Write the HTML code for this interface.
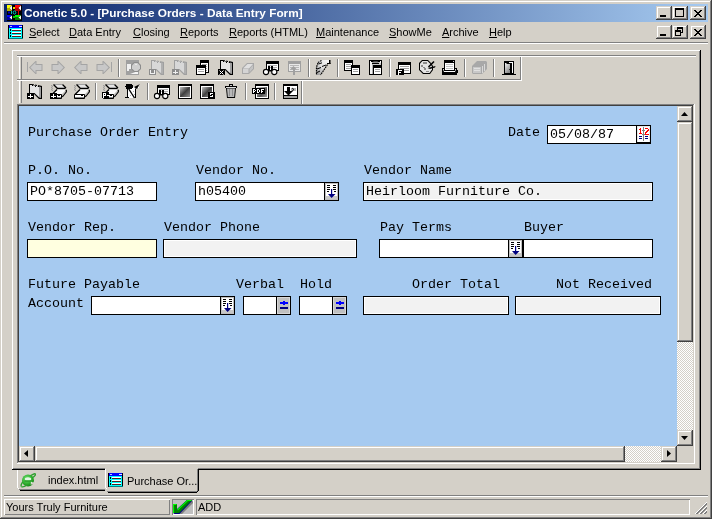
<!DOCTYPE html>
<html><head><meta charset="utf-8">
<style>
*{margin:0;padding:0;box-sizing:border-box}
html,body{width:712px;height:519px;overflow:hidden;background:#d4d0c8;font-family:"Liberation Sans",sans-serif;font-size:11px;color:#000}
.a{position:absolute}
.rz{box-shadow:inset -1px -1px #404040,inset 1px 1px #d4d0c8,inset -2px -2px #808080,inset 2px 2px #fff;background:#d4d0c8}
.hl{background:#fff}
.sh{background:#808080}
.dk{background:#404040}
.mono{font-family:"Liberation Mono",monospace;font-size:13.33px;white-space:pre;line-height:15px}
.fld{border:1px solid #000;background:#fff}
.dis{border:1px solid #000;background:#f2f2f2;box-shadow:inset 1px 1px #fff,inset -1px -1px #fff}
.menu span{position:absolute;top:26px;white-space:nowrap;line-height:13px}
u{text-decoration:underline;text-underline-offset:1px;text-decoration-thickness:1px}
.tb svg{position:absolute}
.sep{position:absolute;width:2px;box-shadow:inset 1px 0 #808080,inset -1px 0 #fff}
.chk{background-color:#fff;background-image:linear-gradient(45deg,#d4d0c8 25%,transparent 25%,transparent 75%,#d4d0c8 75%),linear-gradient(45deg,#d4d0c8 25%,transparent 25%,transparent 75%,#d4d0c8 75%);background-size:2px 2px;background-position:0 0,1px 1px}
</style></head><body><div style="position:absolute;left:0;top:0;width:712px;height:519px;will-change:transform">
<!-- window frame -->
<div class="a rz" style="left:0;top:0;width:712px;height:519px"></div>

<!-- title bar -->
<div class="a" style="left:4px;top:4px;width:704px;height:18px;background:linear-gradient(to right,#0a246a,#a6caf0)"></div>
<svg class="a" style="left:6px;top:5px" width="16" height="16" viewBox="0 0 16 16">
<rect x="1" y="0" width="15" height="16" fill="#000"/>
<polygon points="1,0 6,0 3.5,3 1,3" fill="#ffff00"/><polygon points="1,3 3.5,3 6,6 1,6" fill="#b0b000"/><polygon points="6,0.5 6,5.5 3.5,3" fill="#fff"/>
<polygon points="9,0 15,0 12.5,3 9,3" fill="#ff0000"/><polygon points="9,3 12.5,3 15,6 9,6" fill="#b00000"/><polygon points="15,0.5 15,5.5 12.5,3" fill="#fff"/>
<polygon points="1,10 6,10 3.5,12.5 1,12.5" fill="#0000ff"/><polygon points="1,12.5 3.5,12.5 6,15 1,15" fill="#0000a0"/><polygon points="6,10.5 6,14.5 3.5,12.5" fill="#fff"/>
<polygon points="9,10 15,10 12.5,12.5 9,12.5" fill="#00ff00"/><polygon points="9,12.5 12.5,12.5 15,15 9,15" fill="#008000"/><polygon points="15,10.5 15,14.5 12.5,12.5" fill="#fff"/>
<rect x="7" y="2" width="2" height="2" fill="#e0e000"/><rect x="7" y="11" width="2" height="2" fill="#00d000"/>
<rect x="2" y="6.5" width="2" height="2" fill="#0000c0"/><rect x="12" y="6" width="1" height="4" fill="#e00000"/>
<rect x="5" y="6" width="1" height="3" fill="#00c0c0"/><ellipse cx="8.5" cy="7.5" rx="1.3" ry="1.6" fill="none" stroke="#00c0c0" stroke-width="1"/>
</svg>
<div class="a" style="left:24px;top:6px;color:#fff;font-weight:bold;font-size:11.8px;line-height:15px;white-space:nowrap">Conetic 5.0 - [Purchase Orders - Data Entry Form]</div>
<!-- caption buttons -->
<div class="a rz" style="left:656px;top:6px;width:16px;height:14px"><div class="a" style="left:4px;top:9px;width:6px;height:2px;background:#000"></div></div>
<div class="a rz" style="left:672px;top:6px;width:16px;height:14px"><div class="a" style="left:3px;top:2px;width:9px;height:9px;border:1px solid #000;border-top-width:2px"></div></div>
<div class="a rz" style="left:690px;top:6px;width:16px;height:14px"><svg class="a" style="left:4px;top:4px" width="8" height="7" shape-rendering="crispEdges"><path d="M0 0h2v1h-2zM6 0h2v1h-2zM1 1h2v1h-2zM5 1h2v1h-2zM2 2h4v1h-4zM3 3h2v1h-2zM2 4h4v1h-4zM1 5h2v1h-2zM5 5h2v1h-2zM0 6h2v1h-2zM6 6h2v1h-2z" fill="#000"/></svg></div>

<!-- menu bar -->
<svg class="a" style="left:8px;top:25px" width="15" height="14" viewBox="0 0 15 14">
<rect x="0" y="0" width="15" height="14" fill="#000"/>
<rect x="1" y="0" width="13" height="3" fill="#0000ff"/>
<rect x="2" y="1" width="2" height="1" fill="#c0c0ff"/><rect x="11" y="1" width="3" height="1" fill="#e0e0ff"/>
<rect x="1" y="3" width="13" height="10" fill="#00ffff"/>
<rect x="1" y="13" width="14" height="1" fill="#008080"/>
<rect x="2" y="4" width="1" height="2" fill="#000"/><rect x="4" y="4" width="9" height="1" fill="#fff"/><rect x="4" y="5" width="9" height="1" fill="#502020"/>
<rect x="2" y="7" width="1" height="2" fill="#000"/><rect x="4" y="7" width="9" height="1" fill="#fff"/><rect x="4" y="8" width="9" height="1" fill="#502020"/>
<rect x="2" y="10" width="1" height="2" fill="#000"/><rect x="4" y="10" width="9" height="1" fill="#fff"/><rect x="4" y="11" width="9" height="1" fill="#502020"/>
</svg>
<div class="menu">
<span style="left:29px"><u>S</u>elect</span>
<span style="left:69px"><u>D</u>ata Entry</span>
<span style="left:133px"><u>C</u>losing</span>
<span style="left:180px"><u>R</u>eports</span>
<span style="left:229px"><u>R</u>eports (HTML)</span>
<span style="left:316px"><u>M</u>aintenance</span>
<span style="left:389px"><u>S</u>howMe</span>
<span style="left:442px"><u>A</u>rchive</span>
<span style="left:489px"><u>H</u>elp</span>
</div>
<div class="a rz" style="left:656px;top:25px;width:16px;height:14px"><div class="a" style="left:4px;top:9px;width:6px;height:2px;background:#000"></div></div>
<div class="a rz" style="left:672px;top:25px;width:16px;height:14px">
<div class="a" style="left:5px;top:2px;width:6px;height:6px;border:1px solid #000;border-top-width:2px"></div>
<div class="a" style="left:3px;top:5px;width:6px;height:6px;border:1px solid #000;border-top-width:2px;background:#d4d0c8"></div></div>
<div class="a rz" style="left:690px;top:25px;width:16px;height:14px"><svg class="a" style="left:4px;top:4px" width="8" height="7" shape-rendering="crispEdges"><path d="M0 0h2v1h-2zM6 0h2v1h-2zM1 1h2v1h-2zM5 1h2v1h-2zM2 2h4v1h-4zM3 3h2v1h-2zM2 4h4v1h-4zM1 5h2v1h-2zM5 5h2v1h-2zM0 6h2v1h-2zM6 6h2v1h-2z" fill="#000"/></svg></div>
<div class="a sh" style="left:4px;top:42px;width:704px;height:1px"></div>
<div class="a hl" style="left:4px;top:43px;width:704px;height:1px"></div>

<!-- tab display area -->
<div class="a hl" style="left:12px;top:50px;width:689px;height:1px"></div>
<div class="a hl" style="left:12px;top:50px;width:1px;height:420px"></div>
<div class="a" style="left:700px;top:50px;width:1px;height:420px;background:#000"></div>
<div class="a sh" style="left:699px;top:51px;width:1px;height:418px"></div>
<div class="a" style="left:12px;top:469px;width:689px;height:1px;background:#000"></div>
<div class="a sh" style="left:13px;top:468px;width:687px;height:1px"></div>

<!-- toolbar bands -->
<div class="a sh" style="left:17px;top:55px;width:679px;height:1px"></div>
<div class="a hl" style="left:17px;top:56px;width:679px;height:1px"></div>
<div class="a sh" style="left:17px;top:79px;width:504px;height:1px"></div>
<div class="a hl" style="left:17px;top:80px;width:505px;height:1px"></div>
<div class="a hl" style="left:19px;top:57px;width:1px;height:22px"></div>
<div class="a sh" style="left:21px;top:57px;width:1px;height:22px"></div>
<div class="a hl" style="left:19px;top:81px;width:1px;height:22px"></div>
<div class="a sh" style="left:21px;top:81px;width:1px;height:22px"></div>
<div class="a sh" style="left:520px;top:57px;width:1px;height:22px"></div>
<div class="a hl" style="left:521px;top:57px;width:1px;height:23px"></div>
<div class="a sh" style="left:301px;top:81px;width:1px;height:23px"></div>
<div class="a hl" style="left:302px;top:81px;width:1px;height:23px"></div>
<!--TB-->
<svg class="a" style="left:0;top:0" width="712" height="110" viewBox="0 0 712 110">
<rect x="27" y="62" width="1" height="10" fill="#a4a4a4"/>
<polygon points="29,67.5 35.5,61 36.5,61 36.5,64 42.5,64 42.5,71 36.5,71 36.5,74 35.5,74" fill="#a4a4a4"/>
<polygon points="30.4,67.5 35.7,62.2 35.5,62 35.5,65 41.5,65 41.5,70 35.5,70 35.5,72.8" fill="#c8c8c8"/>
<polygon points="65,67.5 58.5,61 57.5,61 57.5,64 51.5,64 51.5,71 57.5,71 57.5,74 58.5,74" fill="#a4a4a4"/>
<polygon points="63.6,67.5 58.3,62.2 58.5,62 58.5,65 52.5,65 52.5,70 58.5,70 58.5,72.8" fill="#c8c8c8"/>
<polygon points="74,67.5 80.5,61 81.5,61 81.5,64 87.5,64 87.5,71 81.5,71 81.5,74 80.5,74" fill="#a4a4a4"/>
<polygon points="75.4,67.5 80.7,62.2 80.5,62 80.5,65 86.5,65 86.5,70 80.5,70 80.5,72.8" fill="#c8c8c8"/>
<polygon points="110,67.5 103.5,61 102.5,61 102.5,64 96.5,64 96.5,71 102.5,71 102.5,74 103.5,74" fill="#a4a4a4"/>
<polygon points="108.6,67.5 103.3,62.2 103.5,62 103.5,65 97.5,65 97.5,70 103.5,70 103.5,72.8" fill="#c8c8c8"/>
<rect x="111" y="62" width="1" height="10" fill="#a4a4a4"/>
<rect x="126" y="60" width="13" height="15" fill="#a0a0a0"/>
<rect x="127" y="64" width="4" height="5" fill="#f0f0f0"/><rect x="127" y="69" width="2" height="2" fill="#f0f0f0"/>
<polygon points="130,74 138,71 138,74" fill="#f4f4f4"/>
<polygon points="134,62 138,62 141,65 141,69 138,72 134,72 131,69 131,65" fill="#8c8c8c"/>
<polygon points="134.5,63 137.5,63 140,65.5 140,68.5 137.5,71 134.5,71 132,68.5 132,65.5" fill="#cfcfcf"/>
<rect x="135" y="64" width="2" height="1" fill="#e8e8e8"/>
<polygon points="151,60 154,60 162,61.5 164,62 164,75 161,75 156,70 151,70" fill="#a0a0a0"/>
<polygon points="152,61 154,61 161,62.5 161,73.2 156.5,69 152,69" fill="#d8d8d8"/>
<polygon points="161,62.5 163,63 163,74 161,73.5" fill="#b0b0b0"/>
<path d="M154 61h1v1h-1zM157 62h1v1h-1zM160 62h1v1h-1z" fill="#a0a0a0"/>
<path d="M156 60h1v1h-1zM159 61h1v1h-1z" fill="#d4d0c8"/>
<rect x="149" y="69" width="7" height="6" fill="#8c8c8c"/>
<path d="M150 70h1v3h3v-3h1v4h-5z" fill="#f0f0f0"/>
<polygon points="174,60 177,60 185,61.5 187,62 187,75 184,75 179,70 174,70" fill="#a0a0a0"/>
<polygon points="175,61 177,61 184,62.5 184,73.2 179.5,69 175,69" fill="#d8d8d8"/>
<polygon points="184,62.5 186,63 186,74 184,73.5" fill="#b0b0b0"/>
<path d="M177 61h1v1h-1zM180 62h1v1h-1zM183 62h1v1h-1z" fill="#a0a0a0"/>
<path d="M179 60h1v1h-1zM182 61h1v1h-1z" fill="#d4d0c8"/>
<rect x="172" y="69" width="7" height="6" fill="#8c8c8c"/>
<rect x="175" y="70" width="1" height="4" fill="#f0f0f0"/><rect x="173" y="72" width="5" height="1" fill="#f0f0f0"/>
<rect x="200" y="60" width="9" height="13" fill="#000"/>
<rect x="200" y="60" width="9" height="3" fill="#000"/>
<rect x="201" y="63" width="7" height="9" fill="#fff"/>
<rect x="202" y="64" width="5" height="1" fill="#a0a0a0"/>
<rect x="202" y="66" width="5" height="1" fill="#a0a0a0"/>
<rect x="202" y="68" width="5" height="1" fill="#a0a0a0"/>
<rect x="202" y="70" width="5" height="1" fill="#a0a0a0"/>
<rect x="196" y="65" width="10" height="10" fill="#000"/>
<rect x="196" y="65" width="10" height="3" fill="#000"/>
<rect x="197" y="68" width="8" height="6" fill="#fff"/>
<rect x="198" y="69" width="6" height="1" fill="#a0a0a0"/>
<rect x="198" y="71" width="6" height="1" fill="#a0a0a0"/>
<polygon points="220,60 223,60 231,61.5 233,62 233,75 230,75 225,70 220,70" fill="#000"/>
<polygon points="221,61 223,61 230,62.5 230,73.2 225.5,69 221,69" fill="#e4e4e4"/>
<polygon points="230,62.5 232,63 232,74 230,73.5" fill="#a0a0a0"/>
<path d="M223 61h1v1h-1zM226 62h1v1h-1zM229 62h1v1h-1z" fill="#000"/>
<path d="M225 60h1v1h-1zM228 61h1v1h-1z" fill="#d4d0c8"/>
<rect x="218" y="69" width="7" height="6" fill="#000"/>
<path d="M219.5 70.5l4 4M223.5 70.5l-4 4" stroke="#fff" stroke-width="1"/>
<polygon points="242,68 247,63 254,63 254,69 249,74 242,74" fill="#a8a8a8"/>
<polygon points="243,68.5 247.5,64 253,64 249,68.5" fill="#e0e0e0"/>
<rect x="243" y="69" width="5.5" height="4" fill="#d4d4d4"/>
<polygon points="249.5,69 253,65 253,68.6 249.5,72.5" fill="#c4c4c4"/>
<rect x="266" y="61" width="13" height="10" fill="#000"/>
<rect x="266" y="61" width="13" height="3" fill="#000"/>
<rect x="267" y="64" width="11" height="6" fill="#fff"/>
<rect x="268" y="65" width="9" height="1" fill="#b0b0b0"/>
<rect x="268" y="67" width="9" height="1" fill="#b0b0b0"/>
<rect x="268" y="66" width="2" height="4" fill="#000"/><rect x="271" y="66" width="2" height="4" fill="#000"/>
<circle cx="266" cy="72" r="2.6" fill="#fff" stroke="#000" stroke-width="1.1"/><circle cx="274.3" cy="72" r="2.6" fill="#fff" stroke="#000" stroke-width="1.1"/>
<rect x="268.7" y="70" width="3" height="1.5" fill="#000"/>
<rect x="288" y="61" width="13" height="11" fill="#a0a0a0"/>
<rect x="288" y="61" width="13" height="3" fill="#a0a0a0"/>
<rect x="289" y="64" width="11" height="7" fill="#e8e8e8"/>
<rect x="290" y="65" width="9" height="1" fill="#b8b8b8"/>
<rect x="290" y="67" width="9" height="1" fill="#b8b8b8"/>
<rect x="290" y="69" width="9" height="1" fill="#b8b8b8"/>
<polygon points="293.5,66 297,69.5 295,69.5 295,75 293,75 293,69.5 290,69.5" fill="#a0a0a0"/>
<rect x="118" y="59" width="1" height="18" fill="#808080"/><rect x="119" y="59" width="1" height="18" fill="#fff"/>
<rect x="308" y="59" width="1" height="18" fill="#808080"/><rect x="309" y="59" width="1" height="18" fill="#fff"/>
<rect x="337" y="59" width="1" height="18" fill="#808080"/><rect x="338" y="59" width="1" height="18" fill="#fff"/>
<rect x="389" y="59" width="1" height="18" fill="#808080"/><rect x="390" y="59" width="1" height="18" fill="#fff"/>
<rect x="464" y="59" width="1" height="18" fill="#808080"/><rect x="465" y="59" width="1" height="18" fill="#fff"/>
<rect x="493" y="59" width="1" height="18" fill="#808080"/><rect x="494" y="59" width="1" height="18" fill="#fff"/>
<defs><linearGradient id="lg13" x1="1" y1="0" x2="0" y2="1"><stop offset="0" stop-color="#fafafa"/><stop offset="0.5" stop-color="#e0e0e0"/><stop offset="1" stop-color="#909090"/></linearGradient></defs>
<polygon points="318,61 322,60 329.5,60 329.5,63.5 326.5,64 321,75 316,75 316,68 318,65" fill="url(#lg13)"/>
<path d="M321.5 60.5L318 62.5M318 63L316.5 67V75M327.5 64.5L320.5 75" stroke="#000" stroke-width="1.2" stroke-dasharray="1.6 0.8" fill="none"/>
<rect x="329" y="60" width="1.5" height="4" fill="#000"/><rect x="327" y="63" width="3.5" height="1" fill="#000"/>
<path d="M318.5 64L322 62.8M317 69L321 67.5M317 72.5L320 71M322 66.5L326 65" stroke="#000" stroke-width="1" fill="none"/>
<rect x="344" y="60" width="9" height="11" fill="#000"/>
<rect x="344" y="60" width="9" height="3" fill="#000"/>
<rect x="345" y="63" width="7" height="7" fill="#fff"/>
<rect x="346" y="64" width="5" height="1" fill="#a0a0a0"/>
<rect x="346" y="66" width="5" height="1" fill="#a0a0a0"/>
<rect x="346" y="68" width="5" height="1" fill="#a0a0a0"/>
<rect x="351" y="65" width="9" height="10" fill="#000"/>
<rect x="351" y="65" width="9" height="3" fill="#000"/>
<rect x="352" y="68" width="7" height="6" fill="#fff"/>
<rect x="353" y="69" width="5" height="1" fill="#a0a0a0"/>
<rect x="353" y="71" width="5" height="1" fill="#a0a0a0"/>
<rect x="369" y="60" width="13" height="15" fill="#000"/>
<rect x="370" y="62" width="11" height="12" fill="#c8c8c8"/>
<rect x="370" y="62" width="2" height="12" fill="#f4f4f4"/><rect x="372" y="62" width="1" height="12" fill="#b0b0b0"/>
<polygon points="372,63.2 373.5,61.5 377.5,61.5 379,63.2" fill="#909090"/>
<rect x="372" y="63" width="7" height="1" fill="#000"/><rect x="370" y="61" width="1" height="1" fill="#fff"/><rect x="380" y="61" width="1" height="2" fill="#fff"/>
<rect x="373" y="65" width="9" height="10" fill="#000"/>
<rect x="373" y="65" width="9" height="3" fill="#000"/>
<rect x="374" y="68" width="7" height="6" fill="#fff"/>
<rect x="375" y="69" width="5" height="1" fill="#a0a0a0"/>
<rect x="375" y="71" width="5" height="1" fill="#a0a0a0"/>
<rect x="398" y="62" width="13" height="12" fill="#000"/>
<rect x="398" y="62" width="13" height="3" fill="#000"/>
<rect x="399" y="65" width="11" height="8" fill="#fff"/>
<rect x="400" y="66" width="9" height="1" fill="#a0a0a0"/>
<rect x="400" y="68" width="9" height="1" fill="#a0a0a0"/>
<rect x="400" y="70" width="9" height="1" fill="#a0a0a0"/>
<rect x="396" y="69" width="8" height="6" fill="#000"/><path d="M398 70h4v1h-3v1h2v1h-2v2h-1z" fill="#fff"/>
<polygon points="422,60 428,60 431,63 433,66 433,70 430,74 423,74 419,70 419,63" fill="#000"/>
<polygon points="422.5,61 427.5,61 430,63.5 432,66.5 432,69.5 429.5,73 423.5,73 420,69.5 420,63.5" fill="#e4e4e4"/>
<path d="M423 62h4v2h-4zM421 65h2v2h-2zM423 67h2v1h-2zM424 68h2v2h-2zM426 71h3v1h-3z" fill="#8c8c8c"/>
<path d="M434 61.5L428.5 67" stroke="#000" stroke-width="1.6"/><polygon points="427.5,68 435.5,66 435,67.5 430,69" fill="#000"/>
<rect x="442" y="68" width="15" height="7" fill="#000"/><rect x="457" y="70" width="1" height="3" fill="#000"/>
<polygon points="443,69 456,69 455,72 444,72" fill="#fff"/>
<rect x="444" y="60" width="11" height="11" fill="#000"/><rect x="445" y="63" width="9" height="7" fill="#fff"/>
<rect x="446" y="64" width="7" height="1" fill="#c0c0c0"/><rect x="446" y="66" width="7" height="1" fill="#c0c0c0"/><rect x="446" y="68" width="7" height="1" fill="#c0c0c0"/>
<rect x="453" y="61" width="1" height="1" fill="#d0d0d0"/>
<polygon points="472,66 477,61 486,61 487,62 487,69 482,74 473,74 472,73" fill="#a8a8a8"/>
<rect x="473" y="67" width="8" height="6" fill="#c8c8c8"/><rect x="474" y="68" width="6" height="1" fill="#e0e0e0"/><rect x="474" y="70" width="6" height="1" fill="#e0e0e0"/>
<path d="M482.5 66v7M484.5 64v7" stroke="#d8d8d8" stroke-width="1"/>
<defs><linearGradient id="dg20" x1="0" y1="0" x2="0.6" y2="1"><stop offset="0" stop-color="#f4f4f4"/><stop offset="1" stop-color="#8c8c8c"/></linearGradient></defs>
<rect x="504" y="61" width="10" height="13" fill="#000"/>
<rect x="512" y="62" width="1" height="11" fill="#fff"/><rect x="509" y="62" width="3" height="1" fill="#fff"/>
<polygon points="505,63 506,63 507,64 510,64 510,73 505,73" fill="url(#dg20)"/>
<rect x="510" y="69" width="1" height="1" fill="#000"/><rect x="509" y="69" width="1" height="1" fill="#303030"/>
<rect x="502" y="74" width="14" height="1" fill="#000"/>
<polygon points="29,84 32,84 40,85.5 42,86 42,99 39,99 34,94 29,94" fill="#000"/>
<polygon points="30,85 32,85 39,86.5 39,97.2 34.5,93 30,93" fill="#e4e4e4"/>
<polygon points="39,86.5 41,87 41,98 39,97.5" fill="#a0a0a0"/>
<path d="M32 85h1v1h-1zM35 86h1v1h-1zM38 86h1v1h-1z" fill="#000"/>
<path d="M34 84h1v1h-1zM37 85h1v1h-1z" fill="#d4d0c8"/>
<rect x="27" y="93" width="7" height="6" fill="#000"/>
<rect x="30" y="94" width="1" height="4" fill="#fff"/><rect x="28" y="96" width="5" height="1" fill="#fff"/>
<polygon points="54,84.5 62,84.5 66,88.5 57.5,88.5" fill="#e4e4e4"/>
<rect x="54" y="84" width="8" height="1" fill="#a0a0a0"/>
<path d="M53.5 84.5l4 4h8M62.5 84.5l3.5 3.5" stroke="#000" stroke-width="1.3" fill="none"/>
<polygon points="57,89.5 66,89.5 62,94 52,94" fill="#fafafa"/>
<path d="M57 89.5l-5 5M66.3 89.8v2l-4 5" stroke="#000" stroke-width="1.3" fill="none"/>
<polygon points="62.5,94 65.5,91 65.5,92 62.5,96" fill="#c0c0c0"/>
<rect x="51" y="94" width="11" height="5" rx="1" fill="#000"/><rect x="52" y="95" width="9" height="2.5" fill="#fff"/><rect x="58" y="95" width="2" height="1" fill="#000"/>
<path d="M51 85.5l2 1M51 87.5l2 1M51 89.5l2 1" stroke="#909090" stroke-width="1" fill="none"/>
<rect x="50" y="93" width="7" height="6" fill="#000"/>
<rect x="53" y="94" width="1" height="4" fill="#fff"/><rect x="51" y="96" width="5" height="1" fill="#fff"/>
<polygon points="77,84.5 85,84.5 89,88.5 80.5,88.5" fill="#e4e4e4"/>
<rect x="77" y="84" width="8" height="1" fill="#a0a0a0"/>
<path d="M76.5 84.5l4 4h8M85.5 84.5l3.5 3.5" stroke="#000" stroke-width="1.3" fill="none"/>
<polygon points="80,89.5 89,89.5 85,94 75,94" fill="#fafafa"/>
<path d="M80 89.5l-5 5M89.3 89.8v2l-4 5" stroke="#000" stroke-width="1.3" fill="none"/>
<polygon points="85.5,94 88.5,91 88.5,92 85.5,96" fill="#c0c0c0"/>
<rect x="74" y="94" width="11" height="5" rx="1" fill="#000"/><rect x="75" y="95" width="9" height="2.5" fill="#fff"/><rect x="81" y="95" width="2" height="1" fill="#000"/>
<path d="M74 85.5l2 1M74 87.5l2 1M74 89.5l2 1" stroke="#909090" stroke-width="1" fill="none"/>
<polygon points="106,84.5 114,84.5 118,88.5 109.5,88.5" fill="#e4e4e4"/>
<rect x="106" y="84" width="8" height="1" fill="#a0a0a0"/>
<path d="M105.5 84.5l4 4h8M114.5 84.5l3.5 3.5" stroke="#000" stroke-width="1.3" fill="none"/>
<polygon points="109,89.5 118,89.5 114,94 104,94" fill="#fafafa"/>
<path d="M109 89.5l-5 5M118.3 89.8v2l-4 5" stroke="#000" stroke-width="1.3" fill="none"/>
<polygon points="114.5,94 117.5,91 117.5,92 114.5,96" fill="#c0c0c0"/>
<rect x="103" y="94" width="11" height="5" rx="1" fill="#000"/><rect x="104" y="95" width="9" height="2.5" fill="#fff"/><rect x="110" y="95" width="2" height="1" fill="#000"/>
<path d="M103 85.5l2 1M103 87.5l2 1M103 89.5l2 1" stroke="#909090" stroke-width="1" fill="none"/>
<rect x="102" y="92" width="7" height="6" fill="#000"/>
<path d="M103 93h3v3h-2v2h-1z" fill="#fff"/><rect x="104" y="94" width="1" height="1" fill="#000"/><rect x="107" y="95" width="2" height="1" fill="#fff"/>
<polygon points="127,88 134,87 136,89 136,98 127,98" fill="#fff"/>
<rect x="126" y="84" width="6" height="5" fill="#000"/><rect x="125" y="86" width="1" height="1" fill="#000"/><rect x="132" y="85" width="1" height="3" fill="#000"/>
<rect x="127" y="89" width="1" height="9" fill="#000"/><rect x="125" y="97" width="4" height="1" fill="#000"/>
<path d="M128.5 88.5L134.5 98" stroke="#000" stroke-width="1.4"/>
<path d="M135.5 88.5V98" stroke="#000" stroke-width="1"/>
<path d="M133 91h1v1h-1zM132 93h1v1h-1zM134 94h1v1h-1zM130 95h1v1h-1z" fill="#b0b0b0"/>
<polygon points="134,87 140,84 139,85 137,89" fill="#000"/><rect x="138" y="87" width="1" height="1" fill="#fff"/>
<rect x="95" y="83" width="1" height="17" fill="#808080"/><rect x="96" y="83" width="1" height="17" fill="#fff"/>
<rect x="147" y="83" width="1" height="17" fill="#808080"/><rect x="148" y="83" width="1" height="17" fill="#fff"/>
<rect x="245" y="83" width="1" height="17" fill="#808080"/><rect x="246" y="83" width="1" height="17" fill="#fff"/>
<rect x="274" y="83" width="1" height="17" fill="#808080"/><rect x="275" y="83" width="1" height="17" fill="#fff"/>
<rect x="157" y="85" width="13" height="10" fill="#000"/>
<rect x="157" y="85" width="13" height="3" fill="#000"/>
<rect x="158" y="88" width="11" height="6" fill="#fff"/>
<rect x="159" y="89" width="9" height="1" fill="#b0b0b0"/>
<rect x="159" y="91" width="9" height="1" fill="#b0b0b0"/>
<rect x="159" y="90" width="2" height="4" fill="#000"/><rect x="162" y="90" width="2" height="4" fill="#000"/>
<circle cx="157" cy="96" r="2.6" fill="#fff" stroke="#000" stroke-width="1.1"/><circle cx="165.3" cy="96" r="2.6" fill="#fff" stroke="#000" stroke-width="1.1"/>
<rect x="159.7" y="94" width="3" height="1.5" fill="#000"/>
<rect x="178" y="84" width="14" height="15" fill="#000"/>
<rect x="179" y="86" width="12" height="12" fill="#fff"/>
<defs><linearGradient id="pg178" x1="0" y1="0" x2="1" y2="1"><stop offset="0" stop-color="#c0c0c0"/><stop offset="0.5" stop-color="#404040"/><stop offset="1" stop-color="#909090"/></linearGradient></defs>
<rect x="180" y="87" width="10" height="10" fill="url(#pg178)"/>
<rect x="200" y="84" width="14" height="15" fill="#000"/>
<rect x="201" y="86" width="12" height="12" fill="#fff"/>
<defs><linearGradient id="pg200" x1="0" y1="0" x2="1" y2="1"><stop offset="0" stop-color="#c0c0c0"/><stop offset="0.5" stop-color="#404040"/><stop offset="1" stop-color="#909090"/></linearGradient></defs>
<rect x="202" y="87" width="10" height="10" fill="url(#pg200)"/>
<rect x="208" y="92" width="7" height="7" fill="#000"/><path d="M210 93h3v1h-2v1h2v2h-3v-1h2v-1h-2z" fill="#fff"/>
<rect x="225" y="86" width="12" height="2" fill="#000"/><rect x="229" y="84" width="4" height="2" fill="#000"/><rect x="230" y="85" width="2" height="1" fill="#d0d0d0"/>
<polygon points="226,88 236,88 235,98 227,98" fill="#000"/>
<polygon points="227,88.5 235,88.5 234.2,97 227.8,97" fill="#b8b8b8"/>
<rect x="226" y="87" width="10" height="1" fill="#e0e0e0"/>
<path d="M229.5 89v7M232.5 89v7" stroke="#909090" stroke-width="1"/>
<rect x="255" y="84" width="14" height="15" fill="#000"/><rect x="256" y="86" width="12" height="12" fill="#fff"/>
<defs><linearGradient id="pdfg" x1="0" y1="0" x2="1" y2="1"><stop offset="0" stop-color="#e0e0e0"/><stop offset="0.6" stop-color="#505050"/><stop offset="1" stop-color="#a0a0a0"/></linearGradient></defs>
<rect x="257" y="87" width="10" height="10" fill="url(#pdfg)"/>
<rect x="252" y="88" width="13" height="6" fill="#000"/>
<path d="M253 89h2v1h1v1h-1v1h-1v1h-1zM254 90v1h1v-1zM257 89h2v1h1v2h-1v1h-2zM258 90v2h1v-2zM261 89h3v1h-2v1h1v1h-1v1h-1z" fill="#fff" fill-rule="evenodd"/>
<rect x="283" y="84" width="15" height="15" fill="#000"/><rect x="284" y="86" width="13" height="9" fill="#fff"/>
<rect x="284" y="96" width="13" height="2" fill="#a0a0a0"/>
<polygon points="287,87 290,87 290,91 293,91 288.5,95.5 284,91 287,91" fill="#000"/>
<rect x="291" y="88" width="5" height="3" fill="#b0b0b0"/><path d="M292 88l2 1.5-2 1.5" stroke="#000" stroke-width="0.8" fill="none"/>
</svg>
<!--/TB-->

<!-- form area -->
<div class="a sh" style="left:17px;top:104px;width:677px;height:1px"></div>
<div class="a sh" style="left:17px;top:104px;width:1px;height:359px"></div>
<div class="a dk" style="left:18px;top:105px;width:675px;height:1px"></div>
<div class="a dk" style="left:18px;top:105px;width:1px;height:357px"></div>
<div class="a hl" style="left:694px;top:104px;width:1px;height:360px"></div>
<div class="a hl" style="left:17px;top:463px;width:678px;height:1px"></div>
<div class="a" style="left:19px;top:106px;width:658px;height:340px;background:#a6caf0"></div>

<!-- vertical scrollbar -->
<div class="a chk" style="left:677px;top:106px;width:16px;height:340px"></div>
<div class="a rz" style="left:677px;top:106px;width:16px;height:16px"><svg class="a" style="left:4px;top:6px" width="7" height="4"><path d="M3.5 0 7 4H0z" fill="#000"/></svg></div>
<div class="a rz" style="left:677px;top:122px;width:16px;height:220px"></div>
<div class="a rz" style="left:677px;top:430px;width:16px;height:16px"><svg class="a" style="left:4px;top:6px" width="7" height="4"><path d="M0 0h7L3.5 4z" fill="#000"/></svg></div>
<!-- horizontal scrollbar -->
<div class="a chk" style="left:19px;top:446px;width:658px;height:16px"></div>
<div class="a rz" style="left:19px;top:446px;width:16px;height:16px"><svg class="a" style="left:5px;top:4px" width="4" height="7"><path d="M4 0v7L0 3.5z" fill="#000"/></svg></div>
<div class="a rz" style="left:35px;top:446px;width:590px;height:16px"></div>
<div class="a rz" style="left:661px;top:446px;width:16px;height:16px"><svg class="a" style="left:6px;top:4px" width="4" height="7"><path d="M0 0v7L4 3.5z" fill="#000"/></svg></div>
<div class="a" style="left:677px;top:446px;width:16px;height:16px;background:#d4d0c8"></div>

<!-- form content -->
<div class="mono">
<div class="a" style="left:28px;top:125px">Purchase Order Entry</div>
<div class="a" style="left:508px;top:125px">Date</div>
<div class="a" style="left:28px;top:163px">P.O. No.</div>
<div class="a" style="left:196px;top:163px">Vendor No.</div>
<div class="a" style="left:364px;top:163px">Vendor Name</div>
<div class="a" style="left:28px;top:220px">Vendor Rep.</div>
<div class="a" style="left:164px;top:220px">Vendor Phone</div>
<div class="a" style="left:380px;top:220px">Pay Terms</div>
<div class="a" style="left:524px;top:220px">Buyer</div>
<div class="a" style="left:28px;top:277px">Future Payable</div>
<div class="a" style="left:236px;top:277px">Verbal</div>
<div class="a" style="left:300px;top:277px">Hold</div>
<div class="a" style="left:412px;top:277px">Order Total</div>
<div class="a" style="left:556px;top:277px">Not Received</div>
<div class="a" style="left:28px;top:296px">Account</div>
</div>
<!--F-->
<div class="a fld" style="left:547px;top:125px;width:104px;height:19px"></div><div class="a mono" style="left:550px;top:127px">05/08/87</div>
<div class="a" style="left:636px;top:125px;width:1px;height:19px;background:#000"></div>
<div class="a" style="left:637px;top:142px;width:13px;height:1px;background:#000"></div>
<svg class="a" style="left:637px;top:126px" width="13" height="16" viewBox="0 0 13 16"><rect width="13" height="16" fill="#e8e8e8"/><rect x="1" y="1" width="11" height="15" fill="#fff"/><path d="M3 2h1v6H3zM2 3h1v1H2zM2 7h3v1H2z" fill="#ff0000"/><path d="M8 2h3v1h1v2h-1v1H10v1H9v1h3v1H8V6h1V5h1V4h1V3H8z" fill="#ff0000"/><rect x="6" y="1" width="1" height="14" fill="#808080"/><rect x="5" y="4" width="3" height="1" fill="#808080"/><rect x="5" y="8" width="3" height="1" fill="#808080"/><path d="M2 10h3v1H2zM8 10h3v1H8zM2 12h3v1H2zM8 12h3v1H8z" fill="#000080"/></svg>
<div class="a fld" style="left:27px;top:182px;width:130px;height:19px"></div><div class="a mono" style="left:30px;top:184px">PO*8705-07713</div>
<div class="a fld" style="left:195px;top:182px;width:144px;height:19px"></div><div class="a mono" style="left:198px;top:184px">h05400</div>
<div class="a" style="left:324px;top:182px;width:1px;height:19px;background:#000"></div><svg class="a" style="left:325px;top:183px" width="13" height="17" viewBox="0 0 13 17"><rect width="13" height="17" fill="#c0c0c0"/><rect x="1" y="1" width="11" height="12" fill="#fff"/><rect x="1" y="13" width="11" height="3" fill="#c8c8c8"/><path d="M2 2h3v1H2zM8 2h3v1H8zM2 4h3v1H2zM8 4h3v1H8zM2 6h3v1H2zM8 6h3v1H8zM2 8h2v1H2zM9 8h2v1H9z" fill="#000"/><path d="M6 6h1.2v5h3.3L6.6 15 3 11h3z" fill="#000080"/></svg>
<div class="a dis" style="left:363px;top:182px;width:290px;height:19px"></div><div class="a mono" style="left:366px;top:184px">Heirloom Furniture Co.</div>
<div class="a fld" style="left:27px;top:239px;width:130px;height:19px;background:#ffffe0"></div>
<div class="a dis" style="left:163px;top:239px;width:194px;height:19px"></div>
<div class="a fld" style="left:379px;top:239px;width:144px;height:19px"></div>
<div class="a" style="left:508px;top:239px;width:1px;height:19px;background:#000"></div><svg class="a" style="left:509px;top:240px" width="13" height="17" viewBox="0 0 13 17"><rect width="13" height="17" fill="#c0c0c0"/><rect x="1" y="1" width="11" height="12" fill="#fff"/><rect x="1" y="13" width="11" height="3" fill="#c8c8c8"/><path d="M2 2h3v1H2zM8 2h3v1H8zM2 4h3v1H2zM8 4h3v1H8zM2 6h3v1H2zM8 6h3v1H8zM2 8h2v1H2zM9 8h2v1H9z" fill="#000"/><path d="M6 6h1.2v5h3.3L6.6 15 3 11h3z" fill="#000080"/></svg>
<div class="a fld" style="left:523px;top:239px;width:130px;height:19px"></div>
<div class="a fld" style="left:91px;top:296px;width:144px;height:19px"></div>
<div class="a" style="left:220px;top:296px;width:1px;height:19px;background:#000"></div><svg class="a" style="left:221px;top:297px" width="13" height="17" viewBox="0 0 13 17"><rect width="13" height="17" fill="#c0c0c0"/><rect x="1" y="1" width="11" height="12" fill="#fff"/><rect x="1" y="13" width="11" height="3" fill="#c8c8c8"/><path d="M2 2h3v1H2zM8 2h3v1H8zM2 4h3v1H2zM8 4h3v1H8zM2 6h3v1H2zM8 6h3v1H8zM2 8h2v1H2zM9 8h2v1H9z" fill="#000"/><path d="M6 6h1.2v5h3.3L6.6 15 3 11h3z" fill="#000080"/></svg>
<div class="a fld" style="left:243px;top:296px;width:48px;height:19px"></div>
<div class="a" style="left:276px;top:296px;width:1px;height:19px;background:#000"></div><svg class="a" style="left:277px;top:297px" width="13" height="17" viewBox="0 0 13 17"><rect width="13" height="17" fill="#d8d8d8"/><rect x="1" y="1" width="11" height="15" fill="#c0c0c0"/><path d="M3 5h8v2H3zM6 4h2v4H6z" fill="#0000ff"/><path d="M3 10h8v2H3z" fill="#000080"/></svg>
<div class="a fld" style="left:299px;top:296px;width:48px;height:19px"></div>
<div class="a" style="left:332px;top:296px;width:1px;height:19px;background:#000"></div><svg class="a" style="left:333px;top:297px" width="13" height="17" viewBox="0 0 13 17"><rect width="13" height="17" fill="#d8d8d8"/><rect x="1" y="1" width="11" height="15" fill="#c0c0c0"/><path d="M3 5h8v2H3zM6 4h2v4H6z" fill="#0000ff"/><path d="M3 10h8v2H3z" fill="#000080"/></svg>
<div class="a dis" style="left:363px;top:296px;width:146px;height:19px"></div>
<div class="a dis" style="left:515px;top:296px;width:146px;height:19px"></div>
<!--/F-->

<!-- tabs -->
<!--TABS-->
<!-- unselected tab index.html -->
<div class="a hl" style="left:17px;top:470px;width:1px;height:18px"></div>
<div class="a hl" style="left:18px;top:488px;width:1px;height:1px"></div>
<div class="a sh" style="left:19px;top:489px;width:86px;height:1px"></div>
<div class="a" style="left:20px;top:490px;width:85px;height:1px;background:#000"></div>
<svg class="a" style="left:20px;top:472px" width="16" height="16" viewBox="0 0 16 16">
<defs><radialGradient id="ieg" cx="0.4" cy="0.35" r="0.7"><stop offset="0" stop-color="#70e070"/><stop offset="0.6" stop-color="#30b030"/><stop offset="1" stop-color="#108010"/></radialGradient></defs>
<path d="M1.5 14.5C0 13 3 8.5 7.5 5.5S15 1 15.5 2.2 13 5.5 11.5 6.5" stroke="#30a030" stroke-width="1.4" fill="none"/>
<circle cx="8" cy="8.5" r="6" fill="url(#ieg)"/>
<ellipse cx="8" cy="6.9" rx="3.2" ry="1.7" fill="#e0f8e0"/>
<rect x="4.5" y="8.3" width="7.5" height="1.6" fill="#30a030"/>
<path d="M11.2 10.2h3.5v2.2h-4.2z" fill="#d4d0c8"/>
<path d="M10.8 10.4h1.2" stroke="#e0f8e0" stroke-width="1"/>
<path d="M1.5 14.5c1 1 4-0.5 6-2" stroke="#30a030" stroke-width="1.4" fill="none"/>
</svg>
<div class="a" style="left:48px;top:474px;white-space:nowrap;line-height:13px">index.html</div>
<!-- selected tab -->
<div class="a" style="left:105px;top:468px;width:93px;height:23px;background:#d4d0c8"></div>
<div class="a hl" style="left:105px;top:469px;width:1px;height:19px"></div>
<div class="a hl" style="left:106px;top:488px;width:1px;height:1px"></div>
<div class="a sh" style="left:107px;top:491px;width:90px;height:1px"></div>
<div class="a" style="left:108px;top:492px;width:89px;height:1px;background:#000"></div>
<div class="a" style="left:197px;top:491px;width:1px;height:1px;background:#000"></div>
<div class="a sh" style="left:197px;top:469px;width:1px;height:22px"></div>
<div class="a" style="left:198px;top:469px;width:1px;height:22px;background:#000"></div>
<svg class="a" style="left:108px;top:473px" width="15" height="14" viewBox="0 0 15 14">
<rect x="0" y="0" width="15" height="14" fill="#000"/>
<rect x="1" y="0" width="13" height="3" fill="#0000ff"/>
<rect x="2" y="1" width="2" height="1" fill="#c0c0ff"/><rect x="11" y="1" width="3" height="1" fill="#e0e0ff"/>
<rect x="1" y="3" width="13" height="10" fill="#00ffff"/>
<rect x="1" y="13" width="14" height="1" fill="#008080"/>
<rect x="2" y="4" width="1" height="2" fill="#000"/><rect x="4" y="4" width="9" height="1" fill="#fff"/><rect x="4" y="5" width="9" height="1" fill="#502020"/>
<rect x="2" y="7" width="1" height="2" fill="#000"/><rect x="4" y="7" width="9" height="1" fill="#fff"/><rect x="4" y="8" width="9" height="1" fill="#502020"/>
<rect x="2" y="10" width="1" height="2" fill="#000"/><rect x="4" y="10" width="9" height="1" fill="#fff"/><rect x="4" y="11" width="9" height="1" fill="#502020"/>
</svg>
<div class="a" style="left:127px;top:475px;white-space:nowrap;line-height:13px">Purchase Or...</div>
<!--/TABS-->

<!-- status bar -->
<div class="a sh" style="left:4px;top:495px;width:704px;height:1px"></div>
<div class="a hl" style="left:4px;top:496px;width:704px;height:1px"></div>
<div class="a" style="left:4px;top:499px;width:166px;height:16px;box-shadow:inset 1px 1px #fff,inset -1px -1px #808080"></div>
<div class="a" style="left:6px;top:501px;white-space:nowrap;line-height:13px">Yours Truly Furniture</div>
<div class="a" style="left:172px;top:499px;width:22px;height:16px;background:#c0c0c0;box-shadow:inset 1px 1px #808080,inset -1px -1px #fff"></div>
<svg class="a" style="left:173px;top:500px" width="20" height="14" viewBox="0 0 20 14">
<polygon points="18.5,1 20,1.5 20,3 9,14 6,14" fill="#808080"/>
<polygon points="0,4 4,4 4,9 14,0 19,0 19,1 6.5,14 1.5,14 0,12.5" fill="#000080"/>
<polygon points="0,4 4,4 4,10.5 14.3,0 18.5,0 18.5,0.6 6,13 1.5,13 0,11.5" fill="#008000"/>
<path d="M0.5 13V4.5H3.5M4.5 10L14.5 0.5H18.5" stroke="#00ff00" stroke-width="1.2" fill="none"/>
</svg>
<div class="a" style="left:196px;top:499px;width:494px;height:16px;box-shadow:inset 1px 1px #808080,inset -1px -1px #fff"></div>
<div class="a" style="left:198px;top:501px;white-space:nowrap;line-height:13px">ADD</div>
<svg class="a" style="left:695px;top:502px" width="12" height="12" viewBox="0 0 12 12" shape-rendering="crispEdges"><path d="M0 11h1v1h-1zM1 10h1v1h-1zM2 9h1v1h-1zM3 8h1v1h-1zM4 7h1v1h-1zM5 6h1v1h-1zM6 5h1v1h-1zM7 4h1v1h-1zM8 3h1v1h-1zM9 2h1v1h-1zM10 1h1v1h-1zM11 0h1v1h-1zM4 11h1v1h-1zM5 10h1v1h-1zM6 9h1v1h-1zM7 8h1v1h-1zM8 7h1v1h-1zM9 6h1v1h-1zM10 5h1v1h-1zM11 4h1v1h-1zM8 11h1v1h-1zM9 10h1v1h-1zM10 9h1v1h-1zM11 8h1v1h-1z" fill="#fff"/><path d="M1 11h1v1h-1zM2 10h1v1h-1zM2 11h1v1h-1zM3 9h1v1h-1zM3 10h1v1h-1zM4 8h1v1h-1zM4 9h1v1h-1zM5 7h1v1h-1zM5 8h1v1h-1zM6 6h1v1h-1zM6 7h1v1h-1zM7 5h1v1h-1zM7 6h1v1h-1zM8 4h1v1h-1zM8 5h1v1h-1zM9 3h1v1h-1zM9 4h1v1h-1zM10 2h1v1h-1zM10 3h1v1h-1zM11 1h1v1h-1zM11 2h1v1h-1zM5 11h1v1h-1zM6 10h1v1h-1zM6 11h1v1h-1zM7 9h1v1h-1zM7 10h1v1h-1zM8 8h1v1h-1zM8 9h1v1h-1zM9 7h1v1h-1zM9 8h1v1h-1zM10 6h1v1h-1zM10 7h1v1h-1zM11 5h1v1h-1zM11 6h1v1h-1zM9 11h1v1h-1zM10 10h1v1h-1zM10 11h1v1h-1zM11 9h1v1h-1zM11 10h1v1h-1z" fill="#808080"/></svg>
</div></body></html>
